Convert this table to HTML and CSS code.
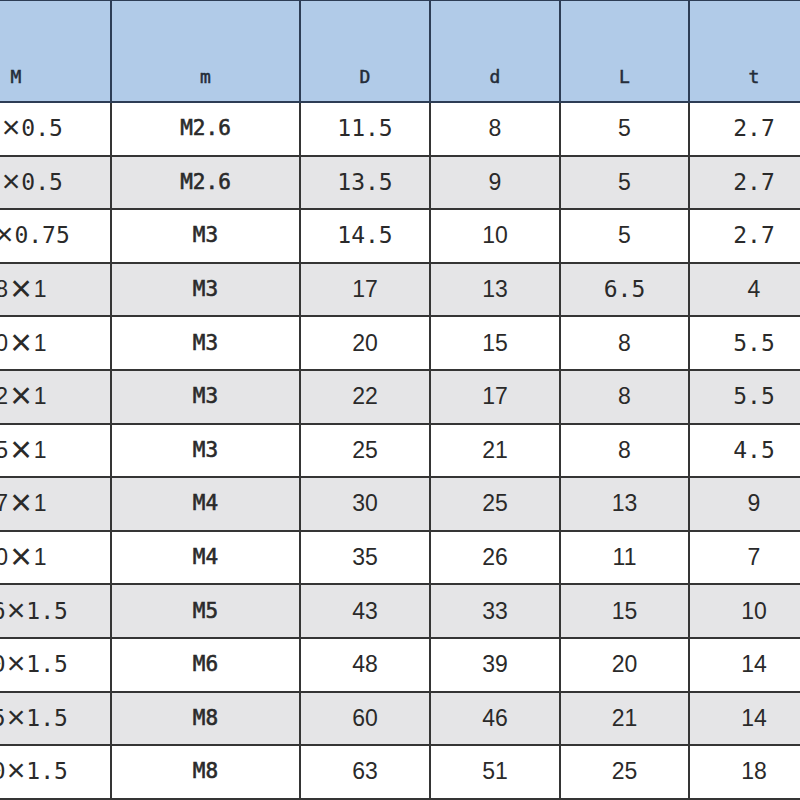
FILE: index.html
```html
<!DOCTYPE html>
<html>
<head>
<meta charset="utf-8">
<link rel="stylesheet" href="styles.css">
</head>
<body>
<table class="spec">
  <colgroup>
    <col class="c1"><col class="c2"><col class="c3"><col class="c4"><col class="c5"><col class="c6">
  </colgroup>
  <thead>
    <tr><th>M</th><th>m</th><th>D</th><th>d</th><th>L</th><th>t</th></tr>
  </thead>
  <tbody>
    <tr><td class="mono first">M10<span class="x">×</span>0.5</td><td class="mm">M2.6</td><td class="mono">11.5</td><td>8</td><td>5</td><td class="mono">2.7</td></tr>
    <tr><td class="mono first">M12<span class="x">×</span>0.5</td><td class="mm">M2.6</td><td class="mono">13.5</td><td>9</td><td>5</td><td class="mono">2.7</td></tr>
    <tr><td class="mono first">M14<span class="x">×</span>0.75</td><td class="mm">M3</td><td class="mono">14.5</td><td>10</td><td>5</td><td class="mono">2.7</td></tr>
    <tr><td class="first mid">M18<span class="x xl">×</span>1</td><td class="mm">M3</td><td>17</td><td>13</td><td class="mono">6.5</td><td>4</td></tr>
    <tr><td class="first mid">M20<span class="x xl">×</span>1</td><td class="mm">M3</td><td>20</td><td>15</td><td>8</td><td class="mono">5.5</td></tr>
    <tr><td class="first mid">M22<span class="x xl">×</span>1</td><td class="mm">M3</td><td>22</td><td>17</td><td>8</td><td class="mono">5.5</td></tr>
    <tr><td class="first mid">M25<span class="x xl">×</span>1</td><td class="mm">M3</td><td>25</td><td>21</td><td>8</td><td class="mono">4.5</td></tr>
    <tr><td class="first mid">M27<span class="x xl">×</span>1</td><td class="mm">M4</td><td>30</td><td>25</td><td>13</td><td>9</td></tr>
    <tr><td class="first mid">M30<span class="x xl">×</span>1</td><td class="mm">M4</td><td>35</td><td>26</td><td>11</td><td>7</td></tr>
    <tr><td class="mono first late">M36<span class="x">×</span>1.5</td><td class="mm">M5</td><td>43</td><td>33</td><td>15</td><td>10</td></tr>
    <tr><td class="mono first late">M40<span class="x">×</span>1.5</td><td class="mm">M6</td><td>48</td><td>39</td><td>20</td><td>14</td></tr>
    <tr><td class="mono first late">M45<span class="x">×</span>1.5</td><td class="mm">M8</td><td>60</td><td>46</td><td>21</td><td>14</td></tr>
    <tr><td class="mono first late">M50<span class="x">×</span>1.5</td><td class="mm">M8</td><td>63</td><td>51</td><td>25</td><td>18</td></tr>
  </tbody>
</table>
</body>
</html>
```

FILE: styles.css
```css
html, body {
  margin: 0;
  padding: 0;
  background: #ffffff;
  overflow: hidden;
  width: 800px;
  height: 800px;
}

.spec {
  border-collapse: collapse;
  table-layout: fixed;
  width: 818px;
  margin-left: -80px;
  margin-top: -1px;
  font-family: "Liberation Sans", Arial, sans-serif;
  color: #2a2a2a;
}

.c1 { width: 190px; }
.c2 { width: 189px; }
.c3 { width: 130px; }
.c4 { width: 130px; }
.c5 { width: 129px; }
.c6 { width: 130px; }

.spec th {
  height: 86px;
  background: #b1cbe8;
  border: 2px solid #2d3d55;
  font-family: "DejaVu Sans Mono", monospace;
  font-weight: normal;
  -webkit-text-stroke: 0.5px #242c38;
  font-size: 18px;
  line-height: 20px;
  color: #242c38;
  vertical-align: bottom;
  padding: 0 0 14px 0;
  text-align: center;
}

.spec td {
  height: 51.6px;
  padding: 0;
  border: 2px solid #353535;
  text-align: center;
  vertical-align: middle;
  font-size: 23px;
  line-height: 1;
}

.spec tbody tr:nth-child(even) td {
  background: #e5e5e7;
}

.spec td.mono {
  font-family: "DejaVu Sans Mono", monospace;
  font-size: 23px;
}

.spec td.first {
  padding-right: 10px;
}

.spec td.first.mid {
  padding-right: 22px;
}

.spec td.first.late {
  padding-right: 0;
}

.spec td.mm {
  font-family: "DejaVu Sans Mono", monospace;
  font-weight: normal;
  -webkit-text-stroke: 0.6px #2a2a2a;
  font-size: 21px;
  color: #2a2a2a;
}

.x {
  font-family: "Liberation Sans", Arial, sans-serif;
  font-size: 32px;
  font-weight: normal;
  line-height: 0;
  vertical-align: -2px;
  margin: 0 1px;
}

.x.xl {
  font-size: 37px;
  vertical-align: -4px;
  margin: 0 2px;
}
```
